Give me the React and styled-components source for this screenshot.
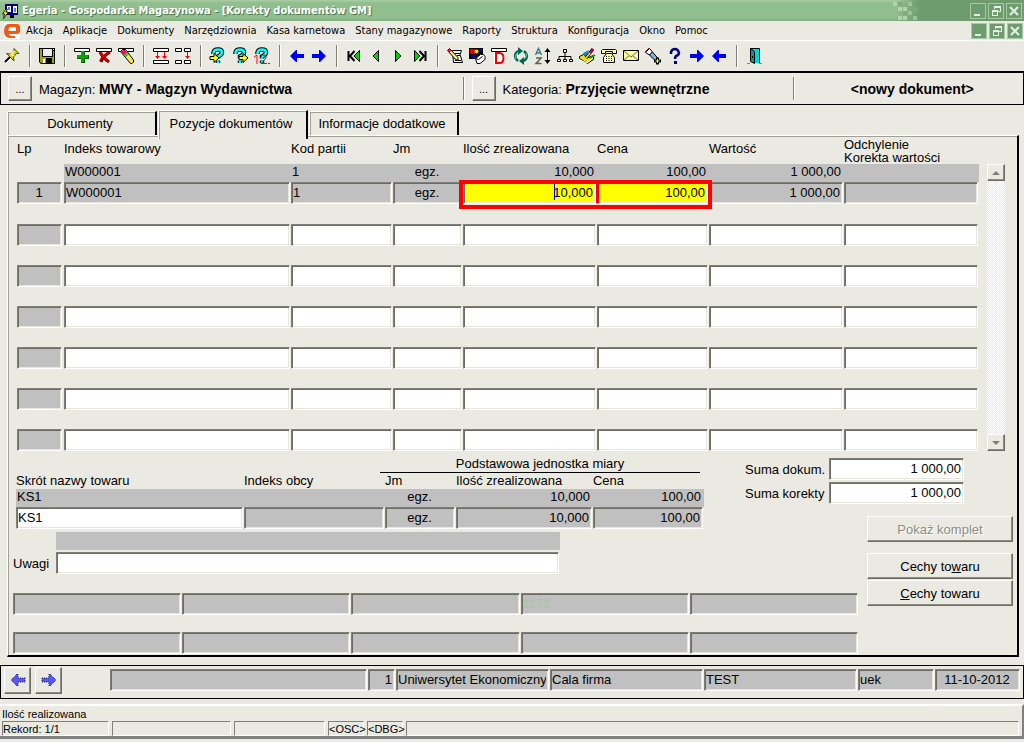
import styled, { createGlobalStyle, css } from "styled-components";

const GlobalStyle = createGlobalStyle`
  * {
    box-sizing: border-box;
  }

  body {
    margin: 0;
    background: #ebeae2;
    color: #000;
    font-family: "Liberation Sans", Arial, sans-serif;
    font-size: 13px;
  }

  button,
  input {
    margin: 0;
    font: inherit;
    color: inherit;
    border-radius: 0;
    outline: none;
  }
`;

const sunken = css`
  border: 1px solid;
  border-color: #808078 #fff #fff #808078;
  box-shadow: inset 1px 1px 0 #6c6c62, inset -1px -1px 0 #e6e6de;
`;

const raised = css`
  border: 1px solid;
  border-color: #fff #6c6c62 #6c6c62 #fff;
  box-shadow: inset -1px -1px 0 #8c8c82;
  background: #ebeae2;
`;

const Window = styled.div`
  min-height: 100vh;
  display: flex;
  flex-direction: column;
`;

const TitleBar = styled.header`
  height: 21px;
  display: flex;
  align-items: center;
  padding: 0 2px;
  background: linear-gradient(to right, transparent calc(100% - 128px), #6f9c6f calc(100% - 104px)),
    linear-gradient(#a8cfa4, #90be8e 3px, #90be8e 18px, #80ae7e);
`;

const Title = styled.h1`
  margin: 0 0 0 4px;
  flex: 1;
  white-space: nowrap;
  color: #fff;
  font: bold 11px "DejaVu Sans Condensed", "DejaVu Sans", sans-serif;
  text-shadow: 1px 1px 0 #4f7a4f;
`;

const Mosaic = styled.svg`
  width: 25px;
  height: 18px;
  margin-right: 52px;
`;

const WindowButtons = styled.div`
  display: flex;
  gap: 2px;
`;

const WindowButton = styled.button`
  width: 16px;
  height: 16px;
  padding: 0;
  display: flex;
  align-items: center;
  justify-content: center;
  border: 1px solid #a5cba3;
  background: #6f9c6f;
`;

const MenuBar = styled.nav`
  height: 20px;
  display: flex;
  align-items: center;
  padding: 0 1px 0 4px;
  border-bottom: 1px solid #fff;
`;

const MenuItems = styled.div`
  flex: 1;
  display: flex;
  padding-left: 1px;
`;

const MenuItem = styled.button`
  padding: 0 5px;
  border: 0;
  background: none;
  white-space: nowrap;
  font: 11px "DejaVu Sans Condensed", "DejaVu Sans", sans-serif;
`;

const ToolBar = styled.div`
  height: 30px;
  display: flex;
  align-items: center;
  padding-left: 1px;
`;

const ToolGroup = styled.div`
  display: flex;
  align-items: center;

  & + & {
    margin-left: 6px;
    padding-left: 6px;
    border-left: 1px solid #808078;
    box-shadow: inset 1px 0 0 #fff;
  }
`;

const ToolButton = styled.button`
  width: 22px;
  height: 22px;
  padding: 0;
  display: flex;
  align-items: center;
  justify-content: center;
  border: 0;
  background: none;
`;

const Icon = styled.svg`
  width: ${(props) => props.$size || 18}px;
  height: ${(props) => props.$size || 18}px;
  flex: none;
`;

const ContextBar = styled.div`
  height: 34px;
  display: flex;
  align-items: center;
  border: 1px solid #000;
  border-top-width: 2px;
`;

const ContextCell = styled.div`
  flex: ${(props) => props.$grow} 1 0;
  height: 23px;
  display: flex;
  align-items: center;
  justify-content: ${(props) => (props.$center ? "center" : "flex-start")};
  padding-left: 7px;
  white-space: nowrap;

  & + & {
    padding-left: 8px;
    border-left: 1px solid #808078;
    box-shadow: inset 1px 0 0 #fff;
  }

  strong {
    font-size: 14px;
  }
`;

const PickButton = styled.button`
  ${raised}
  width: 24px;
  height: 25px;
  margin-right: 7px;
  padding: 0;
  font-size: 11px;
`;

const Main = styled.main`
  padding: 5px 5px 8px 7px;
`;

const Tabs = styled.div`
  display: flex;
  align-items: flex-end;
  gap: 1px;
  height: 25px;
`;

const Tab = styled.button`
  position: relative;
  width: 150px;
  height: ${(props) => (props.$active ? 29 : 24)}px;
  margin-bottom: ${(props) => (props.$active ? -4 : 0)}px;
  z-index: ${(props) => (props.$active ? 1 : 0)};
  padding: 0 3px ${(props) => (props.$active ? 3 : 0)}px 0;
  border: 0;
  border-top: 1px solid #fff;
  border-left: 1px solid #fff;
  border-right: 2px solid #000;
  box-shadow: inset 1px 1px 0 #a0a098;
  background: #ebeae2;
  white-space: nowrap;
`;

const Panel = styled.section`
  border: 1px solid;
  border-color: #fff #000 #000 #fff;
  border-right-width: 2px;
  border-bottom-width: 2px;
  box-shadow: inset 1px 1px 0 #a0a098;
  padding: 1px;
`;

const GridArea = styled.div`
  display: flex;
  gap: 8px;
  padding: 0 11px 1px 8px;
`;

const DataTable = styled.table`
  width: 100%;
  table-layout: fixed;
  border-collapse: collapse;

  th,
  td {
    padding: 0;
    text-align: left;
    font-weight: normal;
    white-space: nowrap;
  }
`;

const ItemsTable = styled(DataTable)`
  flex: 1;
  min-width: 0;

  th {
    height: 27px;
    line-height: 14px;
    padding-bottom: 3px;
  }

  th:last-child {
    padding-bottom: 0;
    vertical-align: bottom;
    line-height: 13px;
  }
`;

const Col = styled.col`
  width: ${(props) => (props.$w ? props.$w + "px" : "auto")};
`;

const OldRow = styled.tr`
  td {
    height: 18px;
    line-height: 14px;
    padding: 0 3px 2px 1px;
    background: #c0c0c0;
  }

  td:empty:first-child {
    background: none;
  }
`;

const FieldRow = styled.tr`
  td {
    height: ${(props) => props.$height}px;
    vertical-align: ${(props) => (props.$bottom ? "bottom" : "top")};
  }
`;

const OldValue = styled.td`
  && {
    text-align: ${(props) => props.$align || "left"};
  }
`;

const Field = styled.input`
  ${sunken}
  display: block;
  width: ${(props) => (props.$w ? props.$w + "px" : "calc(100% - 1px)")};
  height: 22px;
  padding: 0 2px 2px 1px;
  text-align: ${(props) => props.$align || "left"};
  background: ${(props) => props.$bg || "#fff"};
  color: ${(props) => props.$color || "#000"};
`;

const Focused = styled.div`
  position: relative;
`;

const FocusFrame = styled.span`
  position: absolute;
  top: -2px;
  left: -4px;
  width: 253px;
  height: 29px;
  border: 4px solid #f00;
  pointer-events: none;

  &::before,
  &::after {
    content: "";
    position: absolute;
    top: 0;
    left: 133px;
    width: 3px;
    height: 19px;
    background: #f00;
  }

  &::before {
    left: 91px;
    width: 1px;
    height: 16px;
    background: #00f;
  }
`;

const ScrollBar = styled.div`
  width: 18px;
  margin-top: 27px;
  display: flex;
  flex-direction: column;
  justify-content: space-between;
  background: repeating-conic-gradient(#fff 0 25%, #ebeae2 0 50%) 0 0 / 2px 2px;
`;

const ScrollButton = styled.button`
  ${raised}
  width: 18px;
  height: 17px;
  padding: 0;
  display: flex;
  align-items: center;
  justify-content: center;
`;

const Details = styled.div`
  display: grid;
  grid-template-columns: 1fr 114px 146px;
  grid-template-rows: 64px auto auto;
  column-gap: 8px;
  padding: 0 3px 0 4px;
`;

const DetailsMain = styled.div`
  grid-area: 1 / 1 / 3 / 2;
`;

const UnitTable = styled(DataTable)`
  width: calc(100% - 36px);
  margin: 1px 0 0 3px;

  th {
    height: 16px;
    line-height: 16px;
  }
`;

const UnitTitle = styled.span`
  display: block;
  height: 20px;
  line-height: 22px;
  margin: 0 4px 0 -5px;
  text-align: center;
  border-bottom: 1px solid #000;
`;

const Notes = styled.div`
  display: grid;
  grid-template-columns: 43px 504px;
  row-gap: 2px;
  align-items: center;
  padding-top: 3px;
`;

const NotesOld = styled.div`
  grid-column: 2;
  height: 18px;
  background: #c0c0c0;
`;

const Totals = styled.div`
  grid-area: 1 / 2 / 2 / 4;
  display: grid;
  grid-template-columns: 84px 136px;
  grid-auto-rows: 22px;
  row-gap: 2px;
  align-items: center;
  padding-top: 6px;
  white-space: nowrap;
`;

const Actions = styled.div`
  grid-area: 2 / 3 / 4 / 4;
  display: flex;
  flex-direction: column;
`;

const ActionButton = styled.button`
  ${raised}
  height: 26px;
  margin-bottom: 1px;
  padding: 0;

  &:first-child {
    margin-bottom: 11px;
  }

  &:disabled {
    color: #8c8c84;
    text-shadow: 1px 1px 0 #fff;
  }
`;

const Attributes = styled.div`
  grid-area: 3 / 1 / 4 / 3;
  display: grid;
  grid-template-columns: repeat(5, 1fr);
  row-gap: 17px;
  padding-top: 19px;
`;

const InfoBar = styled.div`
  height: 34px;
  display: flex;
  gap: 1px;
  padding: 3px 3px 0 3px;
  border: 1px solid #000;
`;

const NavButtons = styled.div`
  display: flex;
  gap: 4px;
  margin: -2px 47px 0 0;
`;

const NavButton = styled.button`
  ${raised}
  width: 27px;
  height: 27px;
  padding: 0 0 2px;
  display: flex;
  align-items: center;
  justify-content: center;
`;

const WideField = styled(Field)`
  flex: 1;
  min-width: 0;
`;

const StatusBar = styled.footer`
  margin-top: 5px;
  padding: 1px 3px 0 2px;
  border-top: 2px solid #fff;
  border-right: 2px solid #808080;
  border-bottom: 3px solid #808080;
  font-size: 11px;
  line-height: 14px;
`;

const StatusCells = styled.div`
  display: flex;
  gap: 3px;
  height: 15px;
`;

const StatusCell = styled.span`
  width: ${(props) => (props.$w ? props.$w + "px" : "auto")};
  flex: ${(props) => (props.$w ? "none" : 1)};
  line-height: 14px;
  white-space: nowrap;
  border: 1px solid;
  border-color: #808078 #fff #fff #808078;
`;

const q = "M4.5 7V5.5Q5 2.5 9 2.5T13 5.5Q13 7.5 9 9.500V11.500M9 13.500v2.500";

const Question = ({ children }) => (
  <>
    <path d={q} fill="none" stroke="#000" strokeWidth="4.500" />
    <path d={q} fill="none" stroke="#0ff" strokeWidth="2.500" />
    {children}
  </>
);

const MiniArrow = ({ x }) => (
  <path d={`M${x} 9.5h4v-3l5 4.5-5 4.5v-3h-4z`} fill="#ff0" stroke="#000" />
);

const Header = () => <path d="M1.500 1.500h15v3h-15z" fill="#fff" stroke="#000" />;

const rightArrow = "M2 7h7V3h1l6 6-6 6H9v-4H2z";
const leftArrow = "M16 7H9V3H8L2 9l6 6h1v-4h7z";

const icons = {
  pin: (
    <>
      <path d="M2 15l5-5" stroke="#000" strokeWidth="2" />
      <path d="M3 16l5-5" stroke="#fff" />
      <path d="M3.500 6.500l4 .5 3.500-3V1.500l5 5h-2.500l-3 3.500.5 4z" fill="#d0c820" stroke="#55500a" />
      <path d="M7.500 8l4-4M9 9l2-1" stroke="#ffffa0" strokeWidth="1.500" />
    </>
  ),
  save: (
    <>
      <path d="M1 1h16v16H3l-2-2z" fill="#000" />
      <path d="M2 2h2v8h11V4h1v12H4l-2-1z" fill="#a8a800" />
      <path d="M5 2h9v7H5z" fill="#ebebeb" />
      <path d="M15 2h1v1h-1zM5 12h2v4H5z" fill="#fff" />
      <path d="M8 11h6v5H8z" fill="#000" />
    </>
  ),
  add: (
    <>
      <Header />
      <path d="M8 4h4v4h4v4h-4v4H8v-4H4V8h4z" fill="#006000" />
      <path d="M8 4h3v4h4v3h-4v4H8v-4H4V8h4z" fill="#00a800" />
    </>
  ),
  remove: (
    <>
      <Header />
      <path d="M5 5q3 6 9 10M15 5q-7 4-9 10" fill="none" stroke="#600000" strokeWidth="3" />
      <path d="M5 5q3 5 8 9M14 5q-7 4-9 9" fill="none" stroke="#d00000" strokeWidth="2" />
    </>
  ),
  clear: (
    <>
      <Header />
      <path d="M3.500 4.500l2-2h3l8 10.500v2L15 16.500h-1.500z" fill="#ffe060" stroke="#000" />
      <path d="M4 4.500L6 3h2l2 2.500L7 8z" fill="#f00080" />
      <path d="M10 5.500l1.500 2-3 3L7 8z" fill="#00e000" />
    </>
  ),
  mergeRows: (
    <>
      <path d="M1.500 1.500h15v3h-15zM1.500 13.500h15v3h-15z" fill="#fff" stroke="#000" />
      <path d="M5 5h1v4h2l-2.500 3L3 9h2zM12 5h1v4h2l-2.500 3L10 9h2z" fill="#f00" />
    </>
  ),
  splitRows: (
    <>
      <path
        d="M1.500 1.500h6v3h-6zM10.500 1.500h6v3h-6zM1.500 13.500h6v3h-6zM10.500 13.500h6v3h-6z"
        fill="#fff"
        stroke="#000"
      />
      <path d="M13 5h1v4h2l-2.500 3L11 9h2z" fill="#f00" />
    </>
  ),
  queryEnter: (
    <Question>
      <MiniArrow x={1} />
    </Question>
  ),
  queryRun: (
    <Question>
      <MiniArrow x={8} />
    </Question>
  ),
  queryCount: (
    <Question>
      <path d="M1 10l3-2v9M8 10q1-2 3-2 3 0 2 3l-5 5.500h6M15 16.500h2" fill="none" stroke="#f00" />
    </Question>
  ),
  left: <path d={leftArrow} fill="#0000f0" />,
  right: <path d={rightArrow} fill="#0000f0" />,
  first: (
    <>
      <path d="M3.500 4v10M9.500 4L5 9l4.500 5" fill="none" stroke="#000" strokeWidth="2" />
      <path d="M14.500 3.500v11L9 9z" fill="#00d000" stroke="#000" />
    </>
  ),
  previous: <path d="M11.500 3.500v11L6 9z" fill="#00d000" stroke="#000" />,
  next: <path d="M6.500 3.500v11L12 9z" fill="#00d000" stroke="#000" />,
  last: (
    <>
      <path d="M3.500 3.500v11L9 9z" fill="#00d000" stroke="#000" />
      <path d="M14.500 4v10M8.500 4L13 9l-4.500 5" fill="none" stroke="#000" strokeWidth="2" />
    </>
  ),
  edit: (
    <>
      <path d="M6.500 3.500h9l-1.500 4 2.500 8h-9z" fill="#fff" stroke="#000" />
      <path d="M9 6.500h5M11 8.500h3M9 13.500h6" stroke="#000" />
      <path d="M1.500 3.500l2-2 8.500 9v3L9 12z" fill="#ffe870" stroke="#000" />
      <path d="M1.500 3.500l2-2 2 2-2 2z" fill="#f00060" />
    </>
  ),
  shapes: (
    <>
      <path d="M1 1h14v6h-3v5H1z" fill="#000" />
      <path d="M2 2h5v5H2z" fill="#e00000" />
      <path d="M3 8h5v3H3z" fill="#0000d0" />
      <path d="M11 2h3v3h-3z" fill="#0000d0" />
      <circle cx="8.500" cy="4.500" r="2" fill="#ffe000" />
      <path d="M7.500 11.500l5-4h3l1.500 2v3l-5 4H9z" fill="#fff" stroke="#000" />
      <path d="M7.500 11.500l3 1 4-3" fill="none" stroke="#000" />
    </>
  ),
  letterD: (
    <>
      <Header />
      <path d="M4 5h6q5 0 5 6t-5 6H4z" fill="#fff" />
      <path d="M6 6h3.500q4 0 4 5t-4 5H6z" fill="none" stroke="#f00000" strokeWidth="2" />
    </>
  ),
  refresh: (
    <>
      <path d="M6 14Q1.500 10 4 6q1-1.500 3-2M12 4q4.500 4 2 8-1 1.500-3 2" fill="none" stroke="#006850" strokeWidth="2.500" />
      <path d="M6 0l5 4-5 4zM12 10v8l-5-4z" fill="#006850" />
      <path d="M4 12Q2 8 6 5M14 6q1.500 3-.5 5" fill="none" stroke="#50c8a8" />
    </>
  ),
  sort: (
    <>
      <path d="M1.500 8l3-6.500 3 6.500M3 6h3" fill="none" stroke="#408080" strokeWidth="1.500" />
      <path d="M2 11h5l-5 5.500h5.500" fill="none" stroke="#606050" strokeWidth="1.500" />
      <path d="M13.500 3v12" stroke="#000" />
      <path d="M13.500 1l3 4h-6zM13.500 17l3-4h-6z" fill="#000" />
    </>
  ),
  tree: (
    <>
      <path d="M9 5v7M3 12V9.500h12V12" fill="none" stroke="#000" />
      <path
        d="M7.500 2.500h3v3h-3zM1.500 12.500h3v2h-3zM7.500 12.500h3v2h-3zM13.500 12.500h3v2h-3z"
        fill="#fff"
        stroke="#000"
      />
    </>
  ),
  book: (
    <>
      <path d="M1.500 9.500l4-2 5 3 5-2v4l-6 4-8-5z" fill="#e8e020" stroke="#000" />
      <path d="M2 13l7 3 6-5" fill="none" stroke="#fff" />
      <path d="M5 6l6-3-3 7z" fill="#0090d0" />
      <path d="M8 11l7-9" stroke="#000" strokeWidth="3" />
      <path d="M11 7.500l4-5.500" stroke="#d00060" strokeWidth="2" />
      <path d="M12 11l5-3" stroke="#00a000" strokeWidth="2" />
      <path d="M8 11l4-5" stroke="#ffe040" strokeWidth="1.500" />
    </>
  ),
  phone: (
    <>
      <path d="M2.500 2.500h13l1 1v3h-4v-2h-7v2h-4v-3z" fill="#ffffa0" stroke="#000" />
      <path d="M6.500 6.500h5l3 4v5h-11v-5z" fill="#ffffa0" stroke="#000" />
      <path d="M6 9.500h1M8.500 9.500h1M11 9.500h1M6 11.500h1M8.500 11.500h1M11 11.500h1M6 13.500h1M8.500 13.500h1M11 13.500h1" stroke="#000" />
    </>
  ),
  mail: (
    <>
      <path d="M1.500 3.500h15v10h-15z" fill="#ffffa0" stroke="#000" />
      <path d="M2 4l7 6 7-6M2 13l5-4M16 13l-5-4" fill="none" stroke="#707040" />
    </>
  ),
  torch: (
    <>
      <path d="M1.500 5.500l4-4 3 3.500L5.500 8z" fill="#fff" stroke="#000" />
      <path d="M5.500 8l3-3 6 7-2.500 2.500z" fill="#70b8d8" stroke="#000" />
      <path d="M1 5l4-4" stroke="#802020" />
      <path d="M13.500 10.500v7M10 14h7" stroke="#000" strokeWidth="3" />
      <path d="M13.500 12v4M11.500 14h4" stroke="#ff0" />
    </>
  ),
  help: (
    <>
      <path d="M5 7V5q1-3 4-3t4 4q0 2-3 3-1 1-1 3" fill="none" stroke="#000080" strokeWidth="2.500" />
      <path d="M8 14h3v3H8z" fill="#000080" />
    </>
  ),
  exit: (
    <>
      <path d="M5.500 1.500h9V16" fill="none" stroke="#000" />
      <path d="M2 16.500h3M14 16.500h3" stroke="#808080" />
      <path d="M6 2h8v14H9z" fill="#00d8d8" />
      <path d="M5.500 1.500l4 3v12l-4-2z" fill="#009898" stroke="#000" />
      <path d="M7 9h1v2H7z" fill="#000" />
    </>
  ),
};

const toolGroups = [
  [["pin", "Przypnij"]],
  [["save", "Zapisz"]],
  [["add", "Dodaj rekord"], ["remove", "Usuń rekord"], ["clear", "Wyczyść rekord"]],
  [["mergeRows", "Powiel rekord"], ["splitRows", "Powiel pole"]],
  [["queryEnter", "Wprowadź zapytanie"], ["queryRun", "Wykonaj zapytanie"], ["queryCount", "Policz rekordy"]],
  [["left", "Poprzedni blok"], ["right", "Następny blok"]],
  [["first", "Pierwszy"], ["previous", "Poprzedni"], ["next", "Następny"], ["last", "Ostatni"]],
  [
    ["edit", "Edytuj"],
    ["shapes", "Obiekty"],
    ["letterD", "Dokument"],
    ["refresh", "Odśwież"],
    ["sort", "Sortuj"],
    ["tree", "Struktura"],
    ["book", "Notatki"],
    ["phone", "Telefon"],
    ["mail", "Poczta"],
    ["torch", "Szukaj"],
    ["help", "Pomoc"],
    ["right", "Dalej"],
    ["left", "Wstecz"],
  ],
  [["exit", "Wyjście"]],
];

const menu = [
  "Akcja",
  "Aplikacje",
  "Dokumenty",
  "Narzędziownia",
  "Kasa karnetowa",
  "Stany magazynowe",
  "Raporty",
  "Struktura",
  "Konfiguracja",
  "Okno",
  "Pomoc",
];

const columns = [
  { name: "Lp", width: 47, align: "center" },
  { name: "Indeks towarowy" },
  { name: "Kod partii", width: 102 },
  { name: "Jm", width: 70, align: "center" },
  { name: "Ilość zrealizowana", width: 134, align: "right" },
  { name: "Cena", width: 112, align: "right" },
  { name: "Wartość", width: 135, align: "right" },
  { name: "Odchylenie Korekta wartości", width: 135, align: "right" },
];

const item = ["1", "W000001", "1", "egz.", "10,000", "100,00", "1 000,00", ""];

const unitColumns = [
  { name: "Skrót nazwy towaru" },
  { name: "Indeks obcy", width: 141 },
  { name: "Jm", width: 71, align: "center" },
  { name: "Ilość zrealizowana", width: 137, align: "right" },
  { name: "Cena", width: 111, align: "right" },
];

const unit = ["KS1", "", "egz.", "10,000", "100,00"];

const grey = "#c0c0c0";

const WindowControls = () => (
  <WindowButtons>
    <WindowButton aria-label="Minimalizuj">
      <Icon $size={14} viewBox="0 0 14 14">
        <path d="M3 10h6v2H3z" fill="#e4f0e4" />
      </Icon>
    </WindowButton>
    <WindowButton aria-label="Przywróć">
      <Icon $size={14} viewBox="0 0 14 14" shapeRendering="crispEdges">
        <path d="M5.500 5V2.500h6v5H9M3.500 6.500h5v5h-5zM5 3h7M3 7h6" fill="none" stroke="#e4f0e4" />
      </Icon>
    </WindowButton>
    <WindowButton aria-label="Zamknij">
      <Icon $size={14} viewBox="0 0 14 14">
        <path d="M3 3l8 8M11 3l-8 8" stroke="#e4f0e4" strokeWidth="2" />
      </Icon>
    </WindowButton>
  </WindowButtons>
);

const Items = () => (
  <GridArea>
    <ItemsTable>
      <colgroup>
        {columns.map((c) => (
          <Col key={c.name} $w={c.width} />
        ))}
      </colgroup>
      <thead>
        <tr>
          {columns.slice(0, 7).map((c) => (
            <th key={c.name}>{c.name}</th>
          ))}
          <th>
            Odchylenie
            <br />
            Korekta wartości
          </th>
        </tr>
      </thead>
      <tbody>
        <OldRow>
          <td></td>
          {item.slice(1).map((value, i) => (
            <OldValue key={i} $align={columns[i + 1].align}>
              {value}
            </OldValue>
          ))}
        </OldRow>
        <FieldRow $height={23}>
          {columns.map((c, i) => {
            const edited = i === 4 || i === 5;
            const field = (
              <Field
                aria-label={c.name}
                defaultValue={item[i]}
                $align={c.align}
                $bg={edited ? "#ff0" : grey}
                $w={i === 0 ? 45 : undefined}
              />
            );
            return (
              <td key={c.name}>
                {i === 4 ? (
                  <Focused>
                    {field}
                    <FocusFrame />
                  </Focused>
                ) : (
                  field
                )}
              </td>
            );
          })}
        </FieldRow>
        {[2, 3, 4, 5, 6, 7].map((row) => (
          <FieldRow key={row} $height={41} $bottom>
            {columns.map((c, i) => (
              <td key={c.name}>
                <Field
                  aria-label={`${c.name} ${row}`}
                  $align={c.align}
                  $bg={i === 0 ? grey : undefined}
                  $w={i === 0 ? 45 : undefined}
                />
              </td>
            ))}
          </FieldRow>
        ))}
      </tbody>
    </ItemsTable>
    <ScrollBar>
      <ScrollButton aria-label="W górę">
        <Icon $size={8} viewBox="0 0 8 8">
          <path d="M0 6l4-4 4 4z" fill="#808078" />
        </Icon>
      </ScrollButton>
      <ScrollButton aria-label="W dół">
        <Icon $size={8} viewBox="0 0 8 8">
          <path d="M0 2l4 4 4-4z" fill="#808078" />
        </Icon>
      </ScrollButton>
    </ScrollBar>
  </GridArea>
);

const ItemDetails = () => (
  <Details>
    <DetailsMain>
      <UnitTable>
        <colgroup>
          {unitColumns.map((c) => (
            <Col key={c.name} $w={c.width} />
          ))}
        </colgroup>
        <thead>
          <tr>
            <th colSpan={2}></th>
            <th colSpan={3}>
              <UnitTitle>Podstawowa jednostka miary</UnitTitle>
            </th>
          </tr>
          <tr>
            {unitColumns.map((c) => (
              <th key={c.name}>{c.name}</th>
            ))}
          </tr>
        </thead>
        <tbody>
          <OldRow>
            {unit.map((value, i) => (
              <OldValue key={i} $align={unitColumns[i].align}>
                {value}
              </OldValue>
            ))}
          </OldRow>
          <FieldRow $height={22}>
            {unitColumns.map((c, i) => (
              <td key={c.name}>
                <Field
                  aria-label={c.name}
                  defaultValue={unit[i]}
                  $align={c.align}
                  $bg={i === 0 ? undefined : grey}
                />
              </td>
            ))}
          </FieldRow>
        </tbody>
      </UnitTable>
      <Notes>
        <NotesOld />
        <label htmlFor="uwagi">Uwagi</label>
        <Field id="uwagi" />
      </Notes>
    </DetailsMain>
    <Totals>
      <label htmlFor="suma-dokum">Suma dokum.</label>
      <Field id="suma-dokum" defaultValue="1 000,00" $align="right" />
      <label htmlFor="suma-korekty">Suma korekty</label>
      <Field id="suma-korekty" defaultValue="1 000,00" $align="right" />
    </Totals>
    <Actions>
      <ActionButton disabled>Pokaż komplet</ActionButton>
      <ActionButton>
        Cechy to<u>w</u>aru
      </ActionButton>
      <ActionButton>
        <u>C</u>echy towaru
      </ActionButton>
    </Actions>
    <Attributes>
      {Array.from({ length: 10 }, (_, i) => (
        <Field
          key={i}
          aria-label={`Cecha ${i + 1}`}
          defaultValue={i === 3 ? "1172" : ""}
          $bg={grey}
          $color="#a4c8a0"
        />
      ))}
    </Attributes>
  </Details>
);

const App = () => {
  return (
    <Window>
      <GlobalStyle />
      <TitleBar>
        <Icon $size={16} viewBox="0 0 16 16">
          <path d="M3 1h13v11H3z" fill="#000080" />
          <path d="M5 3h4v6H5zM11 3h4v7h-4z" fill="#fff" />
          <path d="M6 4h2v3H6zM12 5h2v4h-2z" fill="#4080ff" />
          <path d="M8 12h4v3H8z" fill="#000" />
          <path d="M4 6l-3.500 5h2l-1 4.500 5-6.500H4l1.500-3z" fill="#ffe000" stroke="#000" strokeWidth=".8" />
        </Icon>
        <Title>Egeria - Gospodarka Magazynowa - [Korekty dokumentów GM]</Title>
        <Mosaic viewBox="0 0 25 18" shapeRendering="crispEdges">
          <path d="M0 0h4v4H0zM5 5h4v4H5zM10 5h4v4h-4zM5 14h4v4H5zM10 14h4v4h-4z" fill="#b0d4ae" />
          <path d="M15 0h4v4h-4zM15 9h4v4h-4zM20 14h4v4h-4z" fill="#9cc49a" />
          <path d="M5 0h4v4H5zM10 9h4v4h-4zM20 5h4v4h-4z" fill="#7fab7e" />
        </Mosaic>
        <WindowControls />
      </TitleBar>
      <MenuBar>
        <Icon $size={16} viewBox="0 0 16 16">
          <path d="M0 0h16v16H0z" fill="#fff" />
          <path
            d="M4 1h9q3 0 3 3v4q0 3-3 3H5q0 2 2 2h4v2H5q-5-1-5-7 0-6 4-7zM6 4Q4.500 4.500 4.500 8H11q1 0 1-1V5q0-1-1-1z"
            fill="#f05a14"
            fillRule="evenodd"
          />
        </Icon>
        <MenuItems>
          {menu.map((name) => (
            <MenuItem key={name}>{name}</MenuItem>
          ))}
        </MenuItems>
        <WindowControls />
      </MenuBar>
      <ToolBar>
        {toolGroups.map((group, i) => (
          <ToolGroup key={i}>
            {group.map(([icon, label]) => (
              <ToolButton key={label} aria-label={label}>
                <Icon viewBox="0 0 18 18">{icons[icon]}</Icon>
              </ToolButton>
            ))}
          </ToolGroup>
        ))}
      </ToolBar>
      <ContextBar>
        <ContextCell $grow={466}>
          <PickButton aria-label="Wybierz magazyn">...</PickButton>
          <span>
            Magazyn: <strong>MWY - Magzyn Wydawnictwa</strong>
          </span>
        </ContextCell>
        <ContextCell $grow={329}>
          <PickButton aria-label="Wybierz kategorię">...</PickButton>
          <span>
            Kategoria: <strong>Przyjęcie wewnętrzne</strong>
          </span>
        </ContextCell>
        <ContextCell $grow={227} $center>
          <strong>&lt;nowy dokument&gt;</strong>
        </ContextCell>
      </ContextBar>
      <Main>
        <Tabs role="tablist">
          <Tab role="tab">Dokumenty</Tab>
          <Tab role="tab" aria-selected="true" $active>
            Pozycje dokumentów
          </Tab>
          <Tab role="tab">Informacje dodatkowe</Tab>
        </Tabs>
        <Panel>
          <Items />
          <ItemDetails />
        </Panel>
      </Main>
      <InfoBar>
        <NavButtons>
          <NavButton aria-label="Poprzednia pozycja">
            <Icon viewBox="0 0 18 18">
              <path d={leftArrow} fill="#5858ff" stroke="#202060" strokeDasharray="1 1" />
            </Icon>
          </NavButton>
          <NavButton aria-label="Następna pozycja">
            <Icon viewBox="0 0 18 18">
              <path d={rightArrow} fill="#5858ff" stroke="#202060" strokeDasharray="1 1" />
            </Icon>
          </NavButton>
        </NavButtons>
        <WideField aria-label="Komunikat" $bg={grey} />
        <Field aria-label="Numer jednostki" defaultValue="1" $w={27} $align="right" $bg={grey} />
        <Field aria-label="Jednostka" defaultValue="Uniwersytet Ekonomiczny" $w={153} $bg={grey} />
        <Field aria-label="Firma" defaultValue="Cala firma" $w={153} $bg={grey} />
        <Field aria-label="Baza" defaultValue="TEST" $w={153} $bg={grey} />
        <Field aria-label="Użytkownik" defaultValue="uek" $w={76} $bg={grey} />
        <Field aria-label="Data" defaultValue="11-10-2012" $w={85} $align="center" $bg={grey} />
      </InfoBar>
      <StatusBar>
        <div>Ilość realizowana</div>
        <StatusCells>
          <StatusCell $w={107}>Rekord: 1/1</StatusCell>
          <StatusCell $w={119} />
          <StatusCell $w={91} />
          <StatusCell $w={36}>&lt;OSC&gt;</StatusCell>
          <StatusCell $w={36}>&lt;DBG&gt;</StatusCell>
          <StatusCell />
        </StatusCells>
      </StatusBar>
    </Window>
  );
};

export default App;
